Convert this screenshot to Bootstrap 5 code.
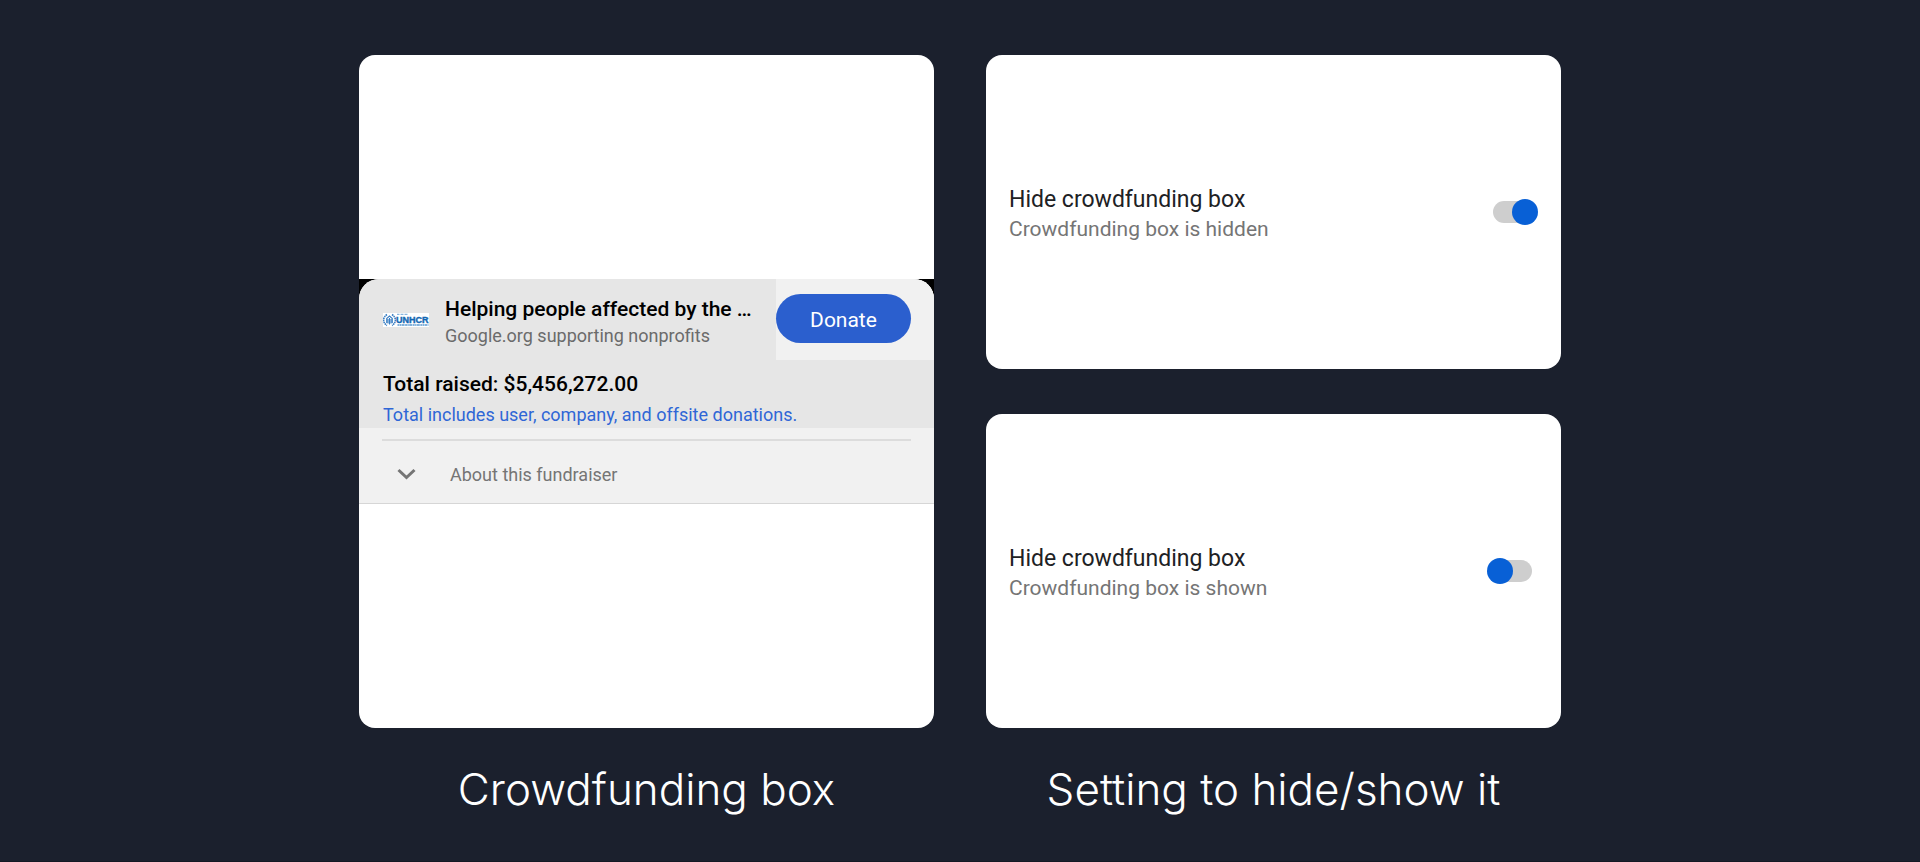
<!DOCTYPE html>
<html lang="en">
<head>
<meta charset="utf-8">
<meta name="viewport" content="width=device-width, initial-scale=1">
<title>Crowdfunding box</title>
<link href="https://cdn.jsdelivr.net/npm/bootstrap@5.3.0/dist/css/bootstrap.min.css" rel="stylesheet">
<style>
  body { background: #1b202d; font-family: Roboto, "Liberation Sans", sans-serif; border-bottom: 1px solid #141824; }
  .showcase { max-width: 1254px; padding: 55px 26px 0; }
  .showcase > .row { --bs-gutter-x: 52px; --bs-gutter-y: 48px; }
  .panel { background: #fff; border-radius: 16px; overflow: hidden; }
  .panels { gap: 45px; }
  .setting { min-height: 314px; padding: 0 23px; }
  .caption-text { font: 300 44px/60px Inter, sans-serif; color: #fff; margin-top: 31px; text-align: center; }

  .fund-wrap { background: #000; }
  .fund { background: #f1f1f1; border-radius: 20px 20px 0 0; border-bottom: 1px solid #d6d6d6; overflow: hidden; color: #000; }
  .fund-shade { background: #e6e6e6; }
  .fund-head { height: 81px; padding-left: 24px; gap: 16px; }
  .fund-title { font-size: 21px; line-height: 28px; font-weight: 500; padding-top: 4px; }
  .fund-org { font-size: 18px; line-height: 26px; color: #6b6b6b; }
  .fund-action { background: #f1f1f1; padding: 15px 23px 0 0; height: 81px; }
  .btn-donate { --bs-btn-color: #fff; --bs-btn-bg: #2b5fce; --bs-btn-hover-color: #fff; --bs-btn-hover-bg: #244fae; --bs-btn-border-width: 0; width: 135px; height: 49px; font-size: 21px; }
  .btn-donate span { display: block; padding-top: 4px; }
  .fund-total { padding: 10px 24px 0; height: 68px; }
  .total-sum { font-size: 21px; line-height: 28px; font-weight: 500; }
  .total-note { font-size: 18px; line-height: 34px; color: #2f66d6; }
  .fund-about { margin: 11px 23px 0; border: 0; border-top: 2px solid #dcdcdc; height: 64px; padding: 4px 0 0 15px; gap: 34px; font-size: 18px; color: #757575; background: none; width: calc(100% - 46px); }

  .setting-text { padding-top: 4px; }
  .setting-name { font-size: 23px; line-height: 30px; color: #202124; }
  .setting-state { font-size: 21px; line-height: 28px; color: #757575; }
  .toggle { appearance: none; position: relative; width: 51px; height: 26px; margin: 0; cursor: pointer; }
  .toggle::before { content: ""; position: absolute; inset: 2px 6px; border-radius: 11px; background: #cecece; }
  .toggle::after { content: ""; position: absolute; left: 0; top: 0; width: 26px; height: 26px; border-radius: 50%; background: #0860d6; }
  .toggle:checked::after { left: 25px; }
</style>
</head>
<body class="min-vh-100">
<main class="container-fluid showcase">
  <div class="row">
    <section class="col-12 col-md-6 d-flex flex-column">
      <div class="panel flex-fill d-flex flex-column justify-content-center">
        <div class="fund-wrap">
          <article class="fund">
            <div class="fund-shade">
              <div class="fund-head d-flex align-items-center">
                <svg class="flex-shrink-0" width="46" height="14" viewBox="0 0 46 14" role="img" aria-label="UNHCR">
                  <rect width="46" height="14" fill="#fff"/>
                  <g fill="none" stroke="#3a7fc4">
                    <path d="M4 1.500C-.5 4.500-.5 9.500 4 12.500M9 1.500c4.500 3 4.500 8 0 11" stroke-width="1.600" stroke-dasharray="1.600 .5"/>
                    <path d="M3.700 10V5.500l2.800-2.500 2.800 2.500V10M6.500 5v6.500M5 6v4.500M8 6v4.500" stroke-width="1.100"/>
                  </g>
                  <path d="M14 1.300h11" stroke="#6ca3d6" stroke-dasharray="2 .5 1 .5"/>
                  <text x="13" y="10" font-family="Liberation Sans, sans-serif" font-weight="700" font-size="9" fill="#1467b3" stroke="#1467b3" stroke-width=".4">UNHCR</text>
                  <path d="M14.500 12h31" stroke="#5b99d0" stroke-width="1.300" stroke-dasharray="2 .4 1.300 .4 3 .5"/>
                </svg>
                <div class="flex-fill text-nowrap overflow-hidden">
                  <div class="fund-title">Helping people affected by the …</div>
                  <div class="fund-org">Google.org supporting nonprofits</div>
                </div>
                <div class="fund-action">
                  <button type="button" class="btn btn-donate rounded-pill p-0"><span>Donate</span></button>
                </div>
              </div>
              <div class="fund-total">
                <div class="total-sum">Total raised: $5,456,272.00</div>
                <div class="total-note">Total includes user, company, and offsite donations.</div>
              </div>
            </div>
            <button type="button" class="fund-about d-flex align-items-center">
              <svg width="19" height="12" viewBox="0 0 19 12" aria-hidden="true"><path d="M1.500 2l8 7.500 8-7.500" fill="none" stroke="#757575" stroke-width="3"/></svg>
              <span>About this fundraiser</span>
            </button>
          </article>
        </div>
      </div>
      <h2 class="caption-text mb-0">Crowdfunding box</h2>
    </section>
    <section class="col-12 col-md-6 d-flex flex-column">
      <div class="panels d-flex flex-column flex-fill">
        <div class="panel setting flex-fill d-flex align-items-center justify-content-between">
          <label class="setting-text" for="hide-on">
            <span class="setting-name d-block">Hide crowdfunding box</span>
            <span class="setting-state d-block">Crowdfunding box is hidden</span>
          </label>
          <input class="toggle" type="checkbox" role="switch" id="hide-on" checked>
        </div>
        <div class="panel setting flex-fill d-flex align-items-center justify-content-between">
          <label class="setting-text" for="hide-off">
            <span class="setting-name d-block">Hide crowdfunding box</span>
            <span class="setting-state d-block">Crowdfunding box is shown</span>
          </label>
          <input class="toggle" type="checkbox" role="switch" id="hide-off">
        </div>
      </div>
      <h2 class="caption-text mb-0">Setting to hide/show it</h2>
    </section>
  </div>
</main>
<script src="https://cdn.jsdelivr.net/npm/bootstrap@5.3.0/dist/js/bootstrap.bundle.min.js"></script>
</body>
</html>
